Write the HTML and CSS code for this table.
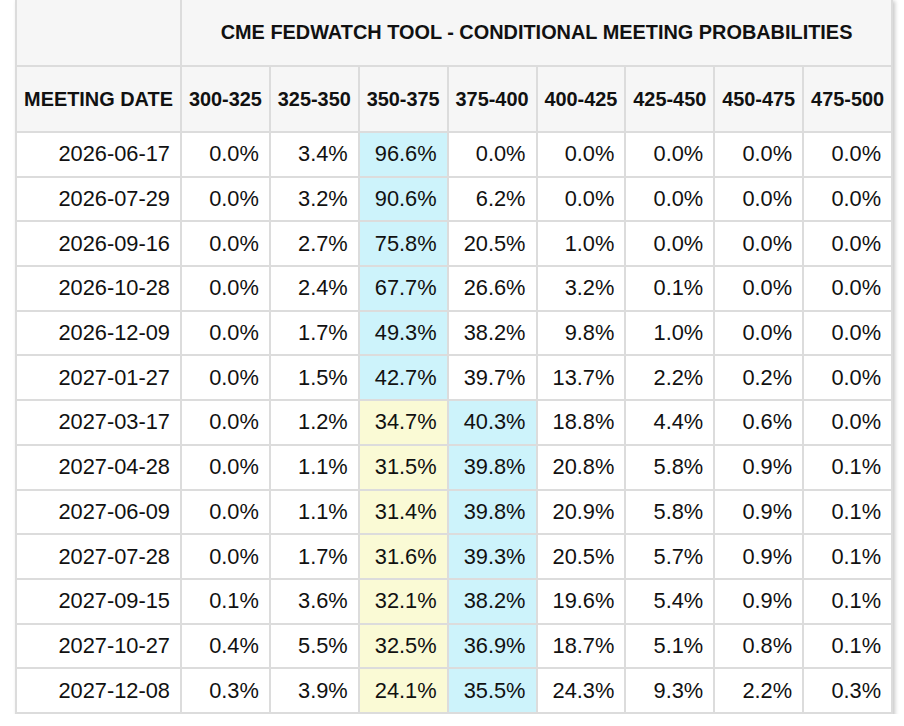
FILE: index.html
```html
<!DOCTYPE html>
<html>
<head>
<meta charset="utf-8">
<link rel="stylesheet" href="styles.css">
</head>
<body>
<table class="fw">
  <colgroup>
    <col class="c-date">
    <col class="c-rate"><col class="c-rate"><col class="c-rate"><col class="c-rate">
    <col class="c-rate"><col class="c-rate"><col class="c-rate"><col class="c-rate">
  </colgroup>
  <thead>
    <tr class="title-row">
      <th class="blank"></th>
      <th colspan="8" class="title">CME FEDWATCH TOOL - CONDITIONAL MEETING PROBABILITIES</th>
    </tr>
    <tr class="head-row">
      <th>MEETING DATE</th>
      <th>300-325</th><th>325-350</th><th>350-375</th><th>375-400</th>
      <th>400-425</th><th>425-450</th><th>450-475</th><th>475-500</th>
    </tr>
  </thead>
  <tbody>
    <tr><td>2026-06-17</td><td>0.0%</td><td>3.4%</td><td class="b">96.6%</td><td>0.0%</td><td>0.0%</td><td>0.0%</td><td>0.0%</td><td>0.0%</td></tr>
    <tr><td>2026-07-29</td><td>0.0%</td><td>3.2%</td><td class="b">90.6%</td><td>6.2%</td><td>0.0%</td><td>0.0%</td><td>0.0%</td><td>0.0%</td></tr>
    <tr><td>2026-09-16</td><td>0.0%</td><td>2.7%</td><td class="b">75.8%</td><td>20.5%</td><td>1.0%</td><td>0.0%</td><td>0.0%</td><td>0.0%</td></tr>
    <tr><td>2026-10-28</td><td>0.0%</td><td>2.4%</td><td class="b">67.7%</td><td>26.6%</td><td>3.2%</td><td>0.1%</td><td>0.0%</td><td>0.0%</td></tr>
    <tr><td>2026-12-09</td><td>0.0%</td><td>1.7%</td><td class="b">49.3%</td><td>38.2%</td><td>9.8%</td><td>1.0%</td><td>0.0%</td><td>0.0%</td></tr>
    <tr><td>2027-01-27</td><td>0.0%</td><td>1.5%</td><td class="b">42.7%</td><td>39.7%</td><td>13.7%</td><td>2.2%</td><td>0.2%</td><td>0.0%</td></tr>
    <tr><td>2027-03-17</td><td>0.0%</td><td>1.2%</td><td class="y">34.7%</td><td class="b">40.3%</td><td>18.8%</td><td>4.4%</td><td>0.6%</td><td>0.0%</td></tr>
    <tr><td>2027-04-28</td><td>0.0%</td><td>1.1%</td><td class="y">31.5%</td><td class="b">39.8%</td><td>20.8%</td><td>5.8%</td><td>0.9%</td><td>0.1%</td></tr>
    <tr><td>2027-06-09</td><td>0.0%</td><td>1.1%</td><td class="y">31.4%</td><td class="b">39.8%</td><td>20.9%</td><td>5.8%</td><td>0.9%</td><td>0.1%</td></tr>
    <tr><td>2027-07-28</td><td>0.0%</td><td>1.7%</td><td class="y">31.6%</td><td class="b">39.3%</td><td>20.5%</td><td>5.7%</td><td>0.9%</td><td>0.1%</td></tr>
    <tr><td>2027-09-15</td><td>0.1%</td><td>3.6%</td><td class="y">32.1%</td><td class="b">38.2%</td><td>19.6%</td><td>5.4%</td><td>0.9%</td><td>0.1%</td></tr>
    <tr><td>2027-10-27</td><td>0.4%</td><td>5.5%</td><td class="y">32.5%</td><td class="b">36.9%</td><td>18.7%</td><td>5.1%</td><td>0.8%</td><td>0.1%</td></tr>
    <tr><td>2027-12-08</td><td>0.3%</td><td>3.9%</td><td class="y">24.1%</td><td class="b">35.5%</td><td>24.3%</td><td>9.3%</td><td>2.2%</td><td>0.3%</td></tr>
  </tbody>
</table>
</body>
</html>
```

FILE: styles.css
```css
html, body {
  margin: 0;
  padding: 0;
  background: #ffffff;
}

body {
  font-family: "Liberation Sans", Arial, sans-serif;
  color: #111;
}

.fw {
  margin: -2px 0 0 15px;
  border-collapse: collapse;
  table-layout: fixed;
  width: 876px;
  box-shadow: 2px 3px 4px rgba(0, 0, 0, 0.22);
}

.c-date { width: 165px; }
.c-rate { width: 88.875px; }

.fw th,
.fw td {
  border: 2px solid #dcdcdc;
  padding: 0;
}

.fw th {
  background: #f6f6f6;
  font-weight: bold;
  font-size: 19.9px;
  text-align: center;
  white-space: nowrap;
}

.title-row { height: 67px; }
.head-row { height: 66px; }

.fw tbody tr { height: 44.7px; }

.fw td {
  font-size: 21.8px;
  text-align: right;
  padding-right: 10px;
  background: #ffffff;
  white-space: nowrap;
}

.fw td.b { background: #cdf3fb; }
.fw td.y { background: #fafad5; }
```
